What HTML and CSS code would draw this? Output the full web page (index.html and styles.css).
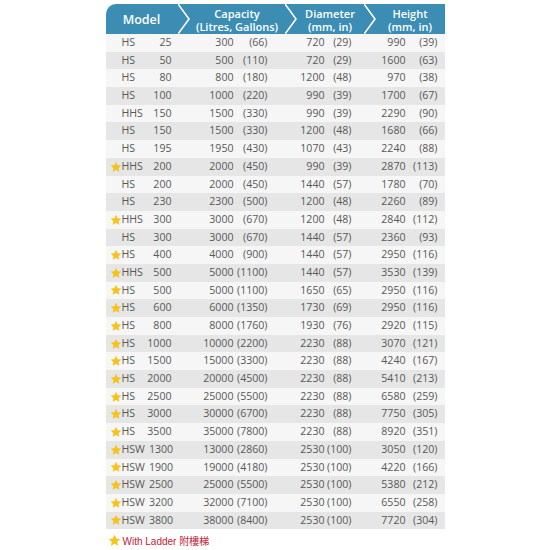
FILE: index.html
```html
<!DOCTYPE html>
<html lang="en">
<head>
  <meta charset="UTF-8">
  <title>Tank Sizes</title>
  <link rel="stylesheet" href="styles.css">
</head>
<body>
  <div class="sheet">
    <svg width="0" height="0" class="defs">
      <defs>
        <symbol id="star" viewBox="0 0 24 24">
          <path d="M12 1.5l3.2 6.9 7.4.8-5.5 5.1 1.5 7.4L12 17.9l-6.6 3.8 1.5-7.4L1.4 9.2l7.4-.8z" fill="#f8c21c"/>
        </symbol>
        <symbol id="chev" viewBox="0 0 12 30">
          <polyline points="0,0 11,15 0,30" fill="none" stroke="#fff" stroke-width="1.6"/>
        </symbol>
      </defs>
    </svg>

    <!-- header band -->
    <div class="head">
      <div class="hcell c-model">Model</div>
      <svg class="chev"><use href="#chev"/></svg>
      <div class="hcell c-cap">Capacity<br>(Litres, Gallons)</div>
      <svg class="chev"><use href="#chev"/></svg>
      <div class="hcell c-dia">Diameter<br>(mm, in)</div>
      <svg class="chev"><use href="#chev"/></svg>
      <div class="hcell c-hgt">Height<br>(mm, in)</div>
    </div>

    <div class="rows" id="rows"></div>

    <div class="legend">
      <svg class="star"><use href="#star"/></svg>
      <span>With Ladder 附樓梯</span>
    </div>
  </div>

  <script>
    // model, size, star, litres, gallons, dia mm, dia in, height mm, height in
    const data = [
      ['HS', 25, 0, 300, 66, 720, 29, 990, 39],
      ['HS', 50, 0, 500, 110, 720, 29, 1600, 63],
      ['HS', 80, 0, 800, 180, 1200, 48, 970, 38],
      ['HS', 100, 0, 1000, 220, 990, 39, 1700, 67],
      ['HHS', 150, 0, 1500, 330, 990, 39, 2290, 90],
      ['HS', 150, 0, 1500, 330, 1200, 48, 1680, 66],
      ['HS', 195, 0, 1950, 430, 1070, 43, 2240, 88],
      ['HHS', 200, 1, 2000, 450, 990, 39, 2870, 113],
      ['HS', 200, 0, 2000, 450, 1440, 57, 1780, 70],
      ['HS', 230, 0, 2300, 500, 1200, 48, 2260, 89],
      ['HHS', 300, 1, 3000, 670, 1200, 48, 2840, 112],
      ['HS', 300, 0, 3000, 670, 1440, 57, 2360, 93],
      ['HS', 400, 1, 4000, 900, 1440, 57, 2950, 116],
      ['HHS', 500, 1, 5000, 1100, 1440, 57, 3530, 139],
      ['HS', 500, 1, 5000, 1100, 1650, 65, 2950, 116],
      ['HS', 600, 1, 6000, 1350, 1730, 69, 2950, 116],
      ['HS', 800, 1, 8000, 1760, 1930, 76, 2920, 115],
      ['HS', 1000, 1, 10000, 2200, 2230, 88, 3070, 121],
      ['HS', 1500, 1, 15000, 3300, 2230, 88, 4240, 167],
      ['HS', 2000, 1, 20000, 4500, 2230, 88, 5410, 213],
      ['HS', 2500, 1, 25000, 5500, 2230, 88, 6580, 259],
      ['HS', 3000, 1, 30000, 6700, 2230, 88, 7750, 305],
      ['HS', 3500, 1, 35000, 7800, 2230, 88, 8920, 351],
      ['HSW', 1300, 1, 13000, 2860, 2530, 100, 3050, 120],
      ['HSW', 1900, 1, 19000, 4180, 2530, 100, 4220, 166],
      ['HSW', 2500, 1, 25000, 5500, 2530, 100, 5380, 212],
      ['HSW', 3200, 1, 32000, 7100, 2530, 100, 6550, 258],
      ['HSW', 3800, 1, 38000, 8400, 2530, 100, 7720, 304]
    ];

    const rows = document.getElementById('rows');

    function pair(cls, num, par) {
      return `<div class="cell ${cls}"><span>${num}</span><span class="par">(${par})</span></div>`;
    }

    data.forEach(d => {
      const row = document.createElement('div');
      row.className = 'row';
      const star = d[2] ? '<svg class="star"><use href="#star"/></svg>' : '';
      const wide = d[0] === 'HSW' ? ' wide' : '';
      row.innerHTML =
        `<div class="cell c-model${wide}"><span class="slot">${star}</span>` +
        `<span class="name">${d[0]}</span><span class="size">${d[1]}</span></div>` +
        pair('c-cap', d[3], d[4]) +
        pair('c-dia', d[5], d[6]) +
        pair('c-hgt', d[7], d[8]);
      rows.appendChild(row);
    });
  </script>
</body>
</html>
```

FILE: styles.css
```css
body {
  margin: 0;
  background: #fff;
  font-family: "Open Sans", "Noto Sans", sans-serif;
  color: #585858;
}
.defs {
  position: absolute;
}
.sheet {
  width: 339px;
  margin: 4px auto 0;
}
.head {
  display: flex;
  height: 30px;
  background-color: #3b8db4;
  border-top-left-radius: 10px;
  color: #fff;
  font-weight: 600;
  font-size: 11px;
  line-height: 13px;
}
.hcell {
  display: flex;
  align-items: center;
  justify-content: center;
  text-align: center;
  padding-top: 1px;
}
.head .c-model { width: 72px; font-size: 12.5px; }
.head .c-cap { width: 95px; }
.head .c-dia { width: 67px; }
.head .c-hgt { width: 69px; }
.chev {
  width: 12px;
  height: 30px;
  flex: none;
}
.row {
  display: grid;
  grid-template-columns: 84px 107px 79px 69px;
  height: 17.7px;
  font-size: 10.6px;
  line-height: 17.7px;
  background-color: #f6f6f6;
}
.row:nth-child(even) {
  background-color: #e6e6e6;
}
.cell {
  display: flex;
  justify-content: flex-end;
  white-space: nowrap;
}
.cell .par {
  text-align: right;
  padding-left: 3px;
}
.row .c-model {
  justify-content: flex-start;
  padding: 0 18px 0 4px;
}
.slot {
  width: 12px;
  display: flex;
  align-items: center;
}
.slot .star {
  width: 12px;
  height: 12px;
}
.size {
  margin-left: auto;
}
.wide .size {
  margin-left: 4px;
}
.row .c-cap { padding-right: 29px; }
.row .c-cap .par { min-width: 31px; }
.row .c-dia { padding-right: 24px; }
.row .c-dia .par { min-width: 27px; padding-left: 0; }
.row .c-hgt { padding-right: 7px; }
.row .c-hgt .par { min-width: 29px; }
.legend {
  display: flex;
  align-items: center;
  gap: 2px;
  height: 17px;
  margin-top: 3px;
  padding-left: 2px;
  color: #c2203c;
  font-family: "Liberation Sans", "Noto Sans CJK TC", sans-serif;
  font-size: 10px;
}
.legend .star {
  width: 13px;
  height: 13px;
}
```
